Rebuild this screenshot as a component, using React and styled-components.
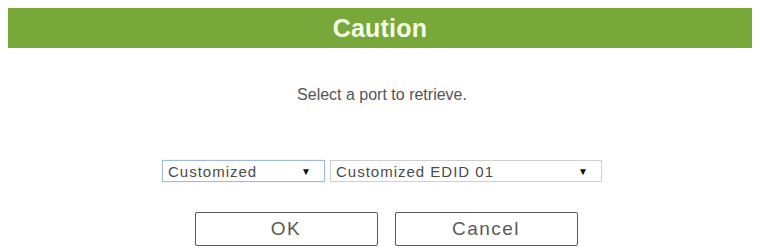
import React from "react"
import styled, { createGlobalStyle } from "styled-components"

const GlobalStyle = createGlobalStyle`
  body {
    margin: 0;
    background: #ffffff;
    font-family: "Liberation Sans", Arial, sans-serif;
  }
`

const Dialog = styled.div`
  width: 760px;
  height: 248px;
  padding: 8px 8px 0;
  box-sizing: border-box;
  display: flex;
  flex-direction: column;
  align-items: center;
  overflow: hidden;
`

const TitleBar = styled.div`
  width: 100%;
  height: 40px;
  background: #77a839;
  color: #f4ffe6;
  font-size: 25px;
  font-weight: bold;
  display: flex;
  align-items: center;
  justify-content: center;
  letter-spacing: 0.2px;
`

const Message = styled.p`
  margin: 37px 0 0 4px;
  font-size: 16px;
  color: #555;
  line-height: 20px;
`

const SelectRow = styled.div`
  display: flex;
  gap: 5px;
  margin-top: 55px;
  margin-left: 4px;
`

const FakeSelect = styled.div`
  width: ${(p) => p.$width}px;
  height: 22px;
  box-sizing: border-box;
  border: 1px solid ${(p) => (p.$focused ? "#9fbbdc" : "#cfcfcf")};
  box-shadow: ${(p) => (p.$focused ? "0 0 1px #b8cde6" : "none")};
  background: #fff;
  display: flex;
  align-items: center;
  justify-content: space-between;
  padding: 0 13px 0 5px;
  font-size: 15px;
  letter-spacing: 1px;
  color: #4a4a4a;
`

const Arrow = styled.span`
  font-size: 10px;
  letter-spacing: 0;
  color: #111;
`

const ButtonRow = styled.div`
  display: flex;
  gap: 17px;
  margin-top: 30px;
  margin-left: 12px;
`

const Button = styled.button`
  width: 183px;
  height: 34px;
  background: #fff;
  border: 1px solid #5a5a5a;
  border-radius: 2px;
  font-family: "Liberation Sans", Arial, sans-serif;
  font-size: 19px;
  letter-spacing: 1.5px;
  color: #5a5a5a;
  padding: 0;
`

export default function App() {
  return (
    <>
      <GlobalStyle />
      <Dialog>
        <TitleBar>Caution</TitleBar>
        <Message>Select a port to retrieve.</Message>
        <SelectRow>
          <FakeSelect $width={163} $focused>
            <span>Customized</span>
            <Arrow>▼</Arrow>
          </FakeSelect>
          <FakeSelect $width={272}>
            <span>Customized EDID 01</span>
            <Arrow>▼</Arrow>
          </FakeSelect>
        </SelectRow>
        <ButtonRow>
          <Button>OK</Button>
          <Button>Cancel</Button>
        </ButtonRow>
      </Dialog>
    </>
  )
}
